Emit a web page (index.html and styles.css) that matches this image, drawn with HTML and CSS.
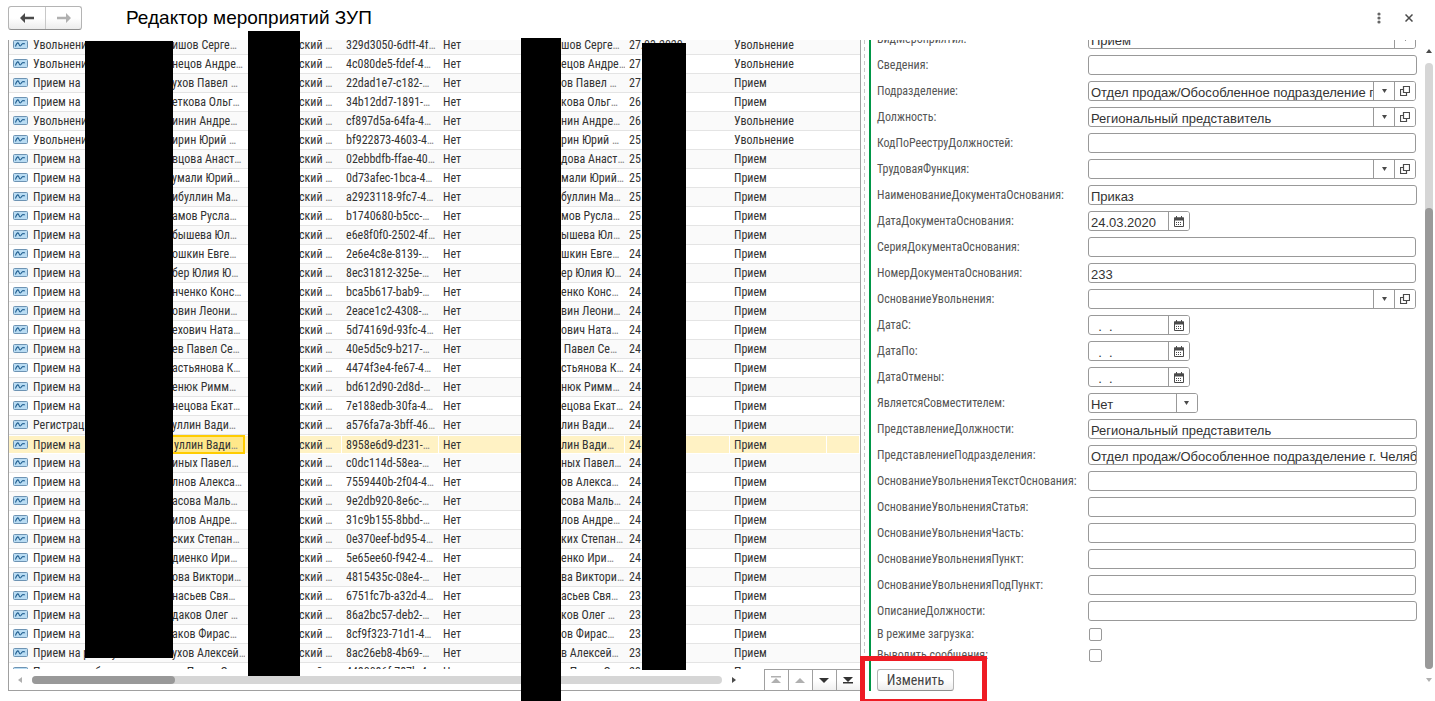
FILE: index.html
```html
<!DOCTYPE html>
<html lang="ru">
<head>
<meta charset="utf-8">
<title>Редактор мероприятий ЗУП</title>
<link rel="stylesheet" href="styles.css">
</head>
<body>
<svg class="defs" aria-hidden="true">
  <symbol id="i-event" viewBox="0 0 15 10"><rect x=".5" y=".5" width="14" height="8" rx="1" fill="#b9dcf3" stroke="#6d93b3"/><path d="M2.500 6.500c.8-2.500 1.800-4 2.700-3.500s.8 3 2 3 1.300-2 2.300-2.300 1.500.3 2.500 0" fill="none" stroke="#1d5c8e" stroke-width="1.100"/></symbol>
  <symbol id="i-down" viewBox="0 0 7 4"><path d="M1 0h5L3.500 4z" fill="#4a4a4a"/></symbol>
  <symbol id="i-open" viewBox="0 0 10 10"><path d="M3.500.5h6v6h-6zM3.500 3.500h-3v6h6v-3" fill="none" stroke="#4a4a4a" stroke-width="1.200"/></symbol>
  <symbol id="i-cal" viewBox="0 0 10 11"><path d="M.5 2h9v8.500h-9z" fill="#fff" stroke="#4a4a4a"/><path d="M0 1.500h10v3H0zM2 0h1v2H2zM7 0h1v2H7z" fill="#4a4a4a"/><path d="M2 6.500h6M2 8.500h6" stroke="#4a4a4a" stroke-dasharray="1 1"/></symbol>
</svg>
<header class="top">
  <div class="history">
    <button type="button" aria-label="Назад"><svg width="14" height="10" viewBox="0 0 14 10"><path d="M0 5l5-5v3.800h9v2.400H5V10z" fill="#4a4a4a"/></svg></button>
    <button type="button" aria-label="Вперед"><svg width="14" height="10" viewBox="0 0 14 10"><path d="M14 5L9 0v3.800H0v2.400h9V10z" fill="#b0b0b0"/></svg></button>
  </div>
  <h1>Редактор мероприятий ЗУП</h1>
  <button type="button" class="plain" aria-label="Меню"><svg width="4" height="12" viewBox="0 0 4 12"><g fill="#666"><circle cx="2" cy="2" r="1.600"/><circle cx="2" cy="6" r="1.600"/><circle cx="2" cy="10" r="1.600"/></g></svg></button>
  <button type="button" class="plain" aria-label="Закрыть"><svg width="8" height="8" viewBox="0 0 8 8"><path d="M.5.5l7 7M7.500.5l-7 7" stroke="#4a4a4a" stroke-width="1.500"/></svg></button>
</header>
<main class="work">
  <section class="list">
    <div class="rows">
      <table>
        <colgroup><col class="w139"><col class="w97"><col class="w97"><col class="w97"><col class="w89"><col class="w97"><col class="w105"><col class="w97"><col></colgroup>
        <tbody id="events"></tbody>
      </table>
    </div>
    <footer class="list-foot">
      <svg class="arrow" width="5" height="6" viewBox="0 0 5 6"><path d="M5 0v6L1 3z" fill="#b0b0b0"/></svg>
      <div class="hbar"><div class="hthumb"></div></div>
      <svg class="arrow" width="5" height="6" viewBox="0 0 5 6"><path d="M0 0v6l4-3z" fill="#4a4a4a"/></svg>
      <div class="nav">
        <button type="button" aria-label="В начало" disabled><svg width="10" height="8" viewBox="0 0 10 8"><path d="M0 0h10v1.500H0zM5 2l5 5H0z"/></svg></button>
        <button type="button" aria-label="Вверх" disabled><svg width="10" height="8" viewBox="0 0 10 8"><path d="M5 2l5 5H0z"/></svg></button>
        <button type="button" aria-label="Вниз"><svg width="10" height="8" viewBox="0 0 10 8"><path d="M5 7l5-5H0z"/></svg></button>
        <button type="button" aria-label="В конец"><svg width="10" height="8" viewBox="0 0 10 8"><path d="M5 6l5-5H0zM0 6h10v1.500H0z"/></svg></button>
      </div>
    </footer>
  </section>
  <div class="splitter"></div>
  <section class="panel">
    <form class="props">
      <label for="f1">ВидМероприятия:</label>
      <div class="field short"><select id="f1"><option>Прием</option></select><span class="seg"><svg width="7" height="4"><use href="#i-down"/></svg></span></div>
      <label for="f2">Сведения:</label>
      <div class="field"><input id="f2"></div>
      <label for="f3">Подразделение:</label>
      <div class="field short"><input id="f3" value="Отдел продаж/Обособленное подразделение г. Челябинск"><button type="button" class="seg" aria-label="Выбрать"><svg width="7" height="4"><use href="#i-down"/></svg></button><button type="button" class="seg" aria-label="Открыть"><svg width="10" height="10"><use href="#i-open"/></svg></button></div>
      <label for="f4">Должность:</label>
      <div class="field short"><input id="f4" value="Региональный представитель"><button type="button" class="seg" aria-label="Выбрать"><svg width="7" height="4"><use href="#i-down"/></svg></button><button type="button" class="seg" aria-label="Открыть"><svg width="10" height="10"><use href="#i-open"/></svg></button></div>
      <label for="f5">КодПоРееструДолжностей:</label>
      <div class="field short"><input id="f5"></div>
      <label for="f6">ТрудоваяФункция:</label>
      <div class="field short"><input id="f6"><button type="button" class="seg" aria-label="Выбрать"><svg width="7" height="4"><use href="#i-down"/></svg></button><button type="button" class="seg" aria-label="Открыть"><svg width="10" height="10"><use href="#i-open"/></svg></button></div>
      <label for="f7">НаименованиеДокументаОснования:</label>
      <div class="field"><input id="f7" value="Приказ"></div>
      <label for="f8">ДатаДокументаОснования:</label>
      <div class="field date"><input id="f8" value="24.03.2020"><button type="button" class="seg" aria-label="Календарь"><svg width="10" height="11"><use href="#i-cal"/></svg></button></div>
      <label for="f9">СерияДокументаОснования:</label>
      <div class="field short"><input id="f9"></div>
      <label for="f10">НомерДокументаОснования:</label>
      <div class="field short"><input id="f10" value="233"></div>
      <label for="f11">ОснованиеУвольнения:</label>
      <div class="field short"><input id="f11"><button type="button" class="seg" aria-label="Выбрать"><svg width="7" height="4"><use href="#i-down"/></svg></button><button type="button" class="seg" aria-label="Открыть"><svg width="10" height="10"><use href="#i-open"/></svg></button></div>
      <label for="f12">ДатаС:</label>
      <div class="field date"><input id="f12" value="&nbsp; .&nbsp; ."><button type="button" class="seg" aria-label="Календарь"><svg width="10" height="11"><use href="#i-cal"/></svg></button></div>
      <label for="f13">ДатаПо:</label>
      <div class="field date"><input id="f13" value="&nbsp; .&nbsp; ."><button type="button" class="seg" aria-label="Календарь"><svg width="10" height="11"><use href="#i-cal"/></svg></button></div>
      <label for="f14">ДатаОтмены:</label>
      <div class="field date"><input id="f14" value="&nbsp; .&nbsp; ."><button type="button" class="seg" aria-label="Календарь"><svg width="10" height="11"><use href="#i-cal"/></svg></button></div>
      <label for="f15">ЯвляетсяСовместителем:</label>
      <div class="field flag"><select id="f15"><option>Нет</option><option>Да</option></select><span class="seg"><svg width="7" height="4"><use href="#i-down"/></svg></span></div>
      <label for="f16">ПредставлениеДолжности:</label>
      <div class="field"><input id="f16" value="Региональный представитель"></div>
      <label for="f17">ПредставлениеПодразделения:</label>
      <div class="field"><input id="f17" value="Отдел продаж/Обособленное подразделение г. Челябинск"></div>
      <label for="f18">ОснованиеУвольненияТекстОснования:</label>
      <div class="field"><input id="f18"></div>
      <label for="f19">ОснованиеУвольненияСтатья:</label>
      <div class="field short"><input id="f19"></div>
      <label for="f20">ОснованиеУвольненияЧасть:</label>
      <div class="field short"><input id="f20"></div>
      <label for="f21">ОснованиеУвольненияПункт:</label>
      <div class="field short"><input id="f21"></div>
      <label for="f22">ОснованиеУвольненияПодПункт:</label>
      <div class="field short"><input id="f22"></div>
      <label for="f23">ОписаниеДолжности:</label>
      <div class="field"><input id="f23"></div>
      <label class="tick" for="f24">В режиме загрузка:</label>
      <input type="checkbox" id="f24">
      <label class="tick" for="f25">Выводить сообщения:</label>
      <input type="checkbox" id="f25">
      <button type="button" class="apply">Изменить</button>
    </form>
    <div class="vscroll">
      <svg width="6" height="5" viewBox="0 0 6 5"><path d="M3 0l3 4H0z" fill="#4a4a4a"/></svg>
      <div class="vbar"><div class="vthumb"></div></div>
      <svg width="6" height="5" viewBox="0 0 6 5"><path d="M3 4l3-4H0z" fill="#b0b0b0"/></svg>
    </div>
  </section>
</main>
<div class="mask m1"></div>
<div class="mask m2"></div>
<div class="mask m3"></div>
<div class="mask m4"></div>
<div class="highlight"></div>
<script src="app.js"></script>
</body>
</html>
```
FILE: styles.css
```css
* { box-sizing: border-box; }
body {
  margin: 0;
  height: 100vh;
  position: relative;
  overflow: hidden;
  display: flex;
  flex-direction: column;
  background: #fff;
  color: #333;
  font: 12px/18px "Roboto Condensed", "Liberation Sans", sans-serif;
}
button, input, select { font: inherit; color: inherit; margin: 0; padding: 0; }
svg { display: block; }
.defs { position: absolute; width: 0; height: 0; }

.top { flex: none; height: 40px; display: flex; align-items: center; padding: 0 22px 4px 8px; }
.top h1 { flex: 1; margin: 0 0 0 44px; font: 19px/24px "Liberation Sans", Arial, sans-serif; color: #000; }
.history { display: flex; height: 24px; border: 1px solid #b4b4b4; border-bottom-color: #8f8f8f; border-radius: 3px; background: linear-gradient(#fff 50%, #ececec); }
.history button { width: 36px; border: 0; background: none; display: grid; place-items: center; }
.history button + button { border-left: 1px solid #c8c8c8; }
.plain { border: 0; background: none; margin-left: 24px; }

.work { flex: 1; min-height: 0; display: flex; padding: 0 2px 10px 8px; }
.list { flex: 853; min-width: 0; display: flex; flex-direction: column; border: 1px solid #a0a0a0; border-top: 0; }
.rows { flex: 1; min-height: 0; overflow: hidden; }
table { width: 100%; table-layout: fixed; border-collapse: separate; border-spacing: 0; margin-top: -4px; }
.w139 { width: 139px; }
.w97 { width: 97px; }
.w89 { width: 89px; }
.w105 { width: 105px; }
td { height: 19px; padding: 1px 0 0 4px; line-height: 17px; white-space: nowrap; overflow: hidden; border-bottom: 1px solid #e4e4e4; }
tr:nth-child(odd) td { background: #fafafa; }
td i { font-style: normal; color: #888; }
td svg { display: inline-block; vertical-align: -1px; margin-right: 5px; }
td.from-mask2 { padding-left: 24px; }
td.from-mask4 { padding-left: 54px; }
td.from-mask6 { padding-left: 33px; }
tr.current td { background: #fff2c4; border-color: #fff; border-right: 1px solid #fff; border-top: 1px solid #fff; line-height: 16px; }
tr.current td.from-mask2 { background: #ffe88a; border: 2px solid #fc0; line-height: 14px; }

.list-foot { flex: none; height: 21px; display: flex; align-items: center; padding-left: 8px; }
.arrow { flex: none; }
.hbar { flex: 1; height: 8px; margin: 0 10px; border-radius: 4px; background: #d6d6d6; }
.hthumb { width: 143px; height: 8px; border-radius: 4px; background: #999; }
.nav { display: flex; align-self: stretch; margin-left: 27px; }
.nav button { width: 24px; border: 0; border-left: 1px solid #a0a0a0; border-top: 1px solid #a0a0a0; background: linear-gradient(#fff 50%, #f0f0f0); display: grid; place-items: center; fill: #333; }
.nav button:disabled { fill: #b0b0b0; background: #fff; }

.splitter { flex: none; width: 8px; background: repeating-linear-gradient(#c8c8c8 0 4px, #fff 4px 7px) 3px 0 / 1px 100% no-repeat; }
.panel { flex: 564; min-width: 0; display: flex; overflow: hidden; border-left: 2px solid #009646; padding-left: 6px; }
.list { flex-grow: 857; }
.panel { flex-grow: 560; }
.props { flex: 1; min-width: 0; display: grid; grid-template-columns: 205px minmax(0, 1fr); column-gap: 6px; row-gap: 6px; align-content: start; margin-top: -11px; }
.props label { line-height: 20px; white-space: nowrap; color: #555; }
.props label.tick { line-height: 15px; }
.field { display: flex; height: 20px; border: 1px solid #999; border-radius: 3px; overflow: hidden; background: #fff; }
.field input, .field select { flex: 1; width: 0; min-width: 0; border: 0; outline: 0; background: none; appearance: none; padding: 3px 0 0 2px; font: 13px/15px "Liberation Sans", Arial, sans-serif; color: #333; }
.short { margin-right: 1px; }
.date { width: 102px; }
.flag { width: 110px; }
.seg { flex: none; width: 21px; border: 0; border-left: 1px solid #999; background: #fff; display: grid; place-items: center; }
input[type="checkbox"] { appearance: none; width: 13px; height: 13px; margin: 1px 0 1px 1px; border: 1px solid #999; border-radius: 2px; background: #fff; }
.apply { width: 77px; height: 22px; border: 1px solid #b4b4b4; border-bottom-color: #8f8f8f; border-radius: 3px; background: linear-gradient(#fff 50%, #ececec); font-size: 14px; line-height: 20px; color: #444; }

.vscroll { flex: none; width: 8px; margin: 9px 0 8px 8px; display: flex; flex-direction: column; align-items: center; gap: 9px; }
.vbar { flex: 1; width: 8px; border-radius: 4px; background: #d6d6d6; display: flex; flex-direction: column; justify-content: flex-end; }
.vthumb { height: 76%; border-radius: 4px; background: #999; }

.mask { position: absolute; background: #000; }
.m1 { left: 85px; top: 41px; width: 88px; height: 617px; }
.m2 { left: 248px; top: 31px; width: 52px; height: 645px; }
.m3 { left: 521px; top: 38px; width: 40px; height: 663px; }
.m4 { left: 642px; top: 43px; width: 44px; height: 627px; }
.highlight { position: absolute; left: 860px; top: 656px; width: 127px; height: 48px; border: 5px solid #ee1c24; }
```
FILE: app.js
```javascript
const HIRE = 'Прием', FIRE = 'Увольнение';
const rows = [
  [FIRE, 'ишов Серге', '329d3050-6dff-4f', 'шов Серге', '27.03.2020'],
  [FIRE, 'нецов Андре', '4c080de5-fdef-4', 'ецов Андре', '27'],
  [HIRE, 'ухов Павел ', '22dad1e7-c182-', 'ов Павел ', '27'],
  [HIRE, 'еткова Ольг', '34b12dd7-1891-', 'кова Ольг', '26'],
  [FIRE, 'инин Андре', 'cf897d5a-64fa-4', 'нин Андре', '26'],
  [FIRE, 'ирин Юрий ', 'bf922873-4603-4', 'рин Юрий ', '25'],
  [HIRE, 'вцова Анаст', '02ebbdfb-ffae-40', 'дова Анаст', '25'],
  [HIRE, 'умали Юрий', '0d73afec-1bca-4', 'мали Юрий', '25'],
  [HIRE, 'ибуллин Ма', 'a2923118-9fc7-4', 'буллин Ма', '25'],
  [HIRE, 'амов Русла', 'b1740680-b5cc-', 'мов Русла', '25'],
  [HIRE, 'бышева Юл', 'e6e8f0f0-2502-4f', 'ышева Юл', '25'],
  [HIRE, 'ошкин Евге', '2e6e4c8e-8139-', 'шкин Евге', '24'],
  [HIRE, 'бер Юлия Ю', '8ec31812-325e-', 'ер Юлия Ю', '24'],
  [HIRE, 'нченко Конс', 'bca5b617-bab9-', 'енко Конс', '24'],
  [HIRE, 'овин Леони', '2eace1c2-4308-', 'вин Леони', '24'],
  [HIRE, 'ехович Ната', '5d74169d-93fc-4', 'ович Ната', '24'],
  [HIRE, 'ев Павел Се', '40e5d5c9-b217-', '&nbsp;Павел Се', '24'],
  [HIRE, 'астьянова К', '4474f3e4-fe67-4', 'стьянова К', '24'],
  [HIRE, 'енюк Римм', 'bd612d90-2d8d-', 'нюк Римм', '24'],
  [HIRE, 'нецова Екат', '7e188edb-30fa-4', 'ецова Екат', '24'],
  ['Регистрация', 'уллин Вади', 'a576fa7a-3bff-46', 'лин Вади', '24'],
  [HIRE, 'уллин Вади', '8958e6d9-d231-', 'лин Вади', '24'],
  [HIRE, 'иных Павел', 'c0dc114d-58ea-', 'ных Павел', '24'],
  [HIRE, 'лнов Алекса', '7559440b-2f04-4', 'ов Алекса', '24'],
  [HIRE, 'асова Маль', '9e2db920-8e6c-', 'сова Маль', '24'],
  [HIRE, 'илов Андре', '31c9b155-8bbd-', 'лов Андре', '24'],
  [HIRE, 'ских Степан', '0e370eef-bd95-4', 'ких Степан', '24'],
  [HIRE, 'диенко Ири', '5e65ee60-f942-4', 'енко Ири', '24'],
  [HIRE, 'ова Виктори', '4815435c-08e4-', 'ва Виктори', '24'],
  [HIRE, 'насьев Свя', '6751fc7b-a32d-4', 'асьев Свя', '23'],
  [HIRE, 'даков Олег ', '86a2bc57-deb2-', 'ков Олег ', '23'],
  [HIRE, 'аков Фирас', '8cf9f323-71d1-4', 'ов Фирас', '23'],
  [HIRE, 'ухов Алексей', '8ac26eb8-4b69-', 'в Алексей', '23'],
  [HIRE, 'ов Павел С', '4480086f-787b-4', 'в Павел С', '23']
];
const icon = '<svg width="15" height="10"><use href="#i-event"/></svg>';
const more = '<i>…</i>';
document.getElementById('events').innerHTML = rows.map(([kind, name, id, name2, date], n) => {
  const title = kind === HIRE ? (n < 32 ? 'Прием на' : 'Прием на работу') : kind;
  const result = kind === FIRE ? FIRE : HIRE;
  return `<tr${n === 21 ? ' class="current"' : ''}><td>${icon}${title}</td><td class="from-mask2">${name}${more}</td>` +
    `<td class="from-mask4">ский ${more}</td><td>${id}${more}</td><td>Нет</td>` +
    `<td class="from-mask6">${name2}${more}</td><td>${date}</td><td>${result}</td><td></td></tr>`;
}).join('');
```
